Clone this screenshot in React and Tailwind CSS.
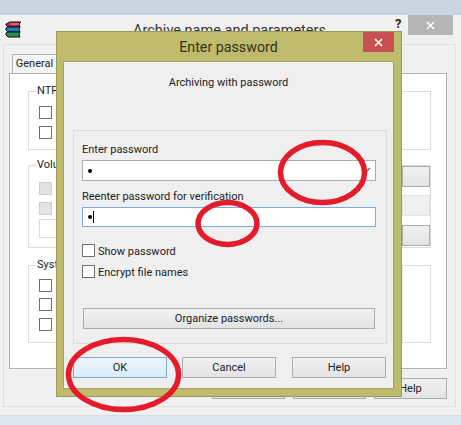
const font = { fontFamily: 'Roboto, "Noto Sans", sans-serif' }

const Check = ({ disabled, label, className = '' }) => (
  <div className={`flex items-center gap-[3px] ${className}`}>
    <div className={`w-[13px] h-[13px] border ${disabled ? 'bg-[#e2e2e2] border-[#cfcfcf]' : 'bg-white border-[#707070]'}`}></div>
    {label && <span className="translate-y-[1px] text-[11px] leading-[13px] text-[#222]">{label}</span>}
  </div>
)

const Btn = ({ children, className = '' }) => (
  <div className={`flex shrink-0 items-center justify-center border border-[#acacac] bg-gradient-to-b from-[#f1f1f1] to-[#e3e3e3] pt-[1px] text-[11px] text-[#222] ${className}`}>
    {children}
  </div>
)

const Group = ({ label, className = '', children }) => (
  <div className={`relative border border-[#dcdcdc] ${className}`}>
    <span className="absolute left-[7px] top-[-9px] bg-white px-[1px] text-[11px] leading-[16px] text-[#222]">{label}</span>
    {children}
  </div>
)

const BooksIcon = () => (
  <svg width="17" height="17" viewBox="0 0 17 17" className="shrink-0">
    <path d="M1 3l4-2h11l-2 2 1 3H3L1 4z" fill="#b3195f" stroke="#111" strokeWidth="1" />
    <path d="M5 3h9" stroke="#e8c83a" strokeWidth="1" />
    <path d="M1 7l2-1h12l-1 2 1 3H3L1 9z" fill="#1e7fb8" stroke="#111" strokeWidth="1" />
    <path d="M1 12l2-1h12l-1 2 1 3H3l-2-2z" fill="#23905a" stroke="#111" strokeWidth="1" />
  </svg>
)

const App = () => {
  return (
    <div className="relative w-[461px] h-[425px] overflow-hidden bg-[#f0f0f0] flex flex-col" style={font}>
      <div className="h-[15px] shrink-0 bg-[#c9d4e3]"></div>

      {/* Back window */}
      <div className="relative h-[400px] shrink-0">
        <div className="flex items-start h-[29px] pl-[5px] pt-[6px]">
          <BooksIcon />
          <div className="w-[415px] text-center text-[14.5px] leading-[20px] text-[#333]">Archive name and parameters</div>
          <span className="mt-[-6px] text-[13px] font-bold leading-[18px] text-[#222] ml-[-42px]">?</span>
          <div className="ml-[7px] mt-[-6px] flex h-[20px] w-[45px] items-center justify-center bg-[#b5b5b5]">
            <svg width="9" height="9" viewBox="0 0 9 9"><path d="M1 1l7 7M8 1l-7 7" stroke="#fff" strokeWidth="1.5" /></svg>
          </div>
        </div>
        <div className="mx-[3px] h-[363px] w-[453px] border border-[#dfdfdf] pl-[5px] pt-[9px]">
          <div className="flex h-[19px] w-[45px] ml-[3px] items-center justify-center border border-b-0 border-[#b5b5b5] bg-[#f5f5f5] text-[11px] text-[#222]">General</div>
          <div className="flex h-[296px] w-[438px] flex-col border border-[#b0b0b0] bg-white pl-[18px] pr-[15px] pt-[17px]">
            <Group label="NTFS" className="h-[59px] pl-[10px] pt-[14px]">
              <Check />
              <Check className="mt-[7px]" />
            </Group>
            <Group label="Volume" className="mt-[15px] h-[83px] pl-[10px] pt-[16px]">
              <Check disabled />
              <Check disabled className="mt-[7px]" />
              <div className="mt-[4px] h-[19px] w-[40px] border border-[#dcdcdc]"></div>
              <div className="absolute right-0 top-[0px] flex w-[28px] flex-col">
                <Btn className="h-[21px] w-[28px]" />
                <div className="mt-[8px] h-[21px] w-[28px] border border-[#e4e4e4] bg-[#f0f0f0]"></div>
                <Btn className="mt-[9px] h-[21px] w-[28px]" />
              </div>
            </Group>
            <Group label="System" className="mt-[17px] h-[78px] pl-[10px] pt-[13px]">
              <Check />
              <Check className="mt-[6px]" />
              <Check className="mt-[7px]" />
              <div className="absolute right-0 top-0 h-[76px] w-[28px] border-l border-[#e8e8e8]"></div>
            </Group>
          </div>
          <div className="flex justify-end gap-[8px] pr-[8px] pt-[9px]">
            <Btn className="h-[21px] w-[73px]" />
            <Btn className="h-[21px] w-[73px]" />
            <Btn className="h-[21px] w-[73px]">Help</Btn>
          </div>
        </div>
      </div>

      <div className="flex-1 border-t border-[#d5dde6] bg-[#dbe5f0]"></div>

      {/* Enter password dialog */}
      <div className="absolute left-[56px] top-[31px] flex h-[366px] w-[346px] flex-col border border-[#9c9a58] bg-[#bfbb6c] pl-[6px] pr-[7px] pb-[7px]">
        <div className="relative flex h-[29px] shrink-0 items-center justify-center pt-[2px] text-[14.25px] text-[#33331c]">
          Enter password
          <div className="absolute right-0 top-0 flex h-[20px] w-[31px] items-center justify-center bg-[#c75050]">
            <svg width="9" height="9" viewBox="0 0 9 9"><path d="M1 1l7 7M8 1l-7 7" stroke="#fff" strokeWidth="1.6" /></svg>
          </div>
        </div>
        <div className="flex flex-1 flex-col border border-[#a5a25f] bg-[#efefef] px-[9px]">
          <div className="h-[68px] pt-[13px] text-center text-[11px] leading-[16px] text-[#222]">Archiving with password</div>
          <div className="h-[214px] w-[314px] border border-[#dcdcdc] pl-[8px] pr-[10px] pt-[11px]">
            <div className="text-[11px] leading-[16px] text-[#222]">Enter password</div>
            <div className="mt-[2px] flex h-[21px] items-center justify-between border border-[#acacac] bg-white pl-[5px] pr-[4px]">
              <span className="h-[4px] w-[4px] rounded-full bg-black"></span>
              <svg width="7" height="7" viewBox="0 0 7 7"><path d="M1 6l5-5" stroke="#666" strokeWidth="1.2" /></svg>
            </div>
            <div className="mt-[8px] text-[11px] leading-[16px] text-[#222]">Reenter password for verification</div>
            <div className="mt-[2px] flex h-[20px] items-center border border-[#7eaad8] bg-white pl-[5px]">
              <span className="h-[4px] w-[4px] rounded-full bg-black"></span>
              <span className="ml-[1px] h-[12px] w-[1px] bg-black"></span>
            </div>
            <Check label="Show password" className="mt-[17px]" />
            <Check label="Encrypt file names" className="mt-[8px]" />
            <Btn className="ml-[1px] mt-[30px] h-[21px] w-[292px]">Organize passwords...</Btn>
          </div>
          <div className="mt-[13px] flex gap-[15px]">
            <div className="flex h-[21px] w-[94px] shrink-0 items-center justify-center border border-[#7eaad8] bg-gradient-to-b from-[#ecf5fd] to-[#dcebf9] pt-[1px] text-[11px] text-[#222]">OK</div>
            <Btn className="h-[21px] w-[94px]">Cancel</Btn>
            <Btn className="ml-[1px] h-[21px] w-[94px]">Help</Btn>
          </div>
        </div>
      </div>

      {/* hand-drawn red circles */}
      <svg className="absolute left-0 top-0" width="461" height="425" viewBox="0 0 461 425" fill="none" stroke="#e31b2a" strokeWidth="5.5">
        <ellipse cx="322.5" cy="172.5" rx="42" ry="30" />
        <ellipse cx="227.5" cy="223.5" rx="29.5" ry="21" />
        <ellipse cx="123.5" cy="374.5" rx="55" ry="35" />
      </svg>
    </div>
  )
}

export default App
